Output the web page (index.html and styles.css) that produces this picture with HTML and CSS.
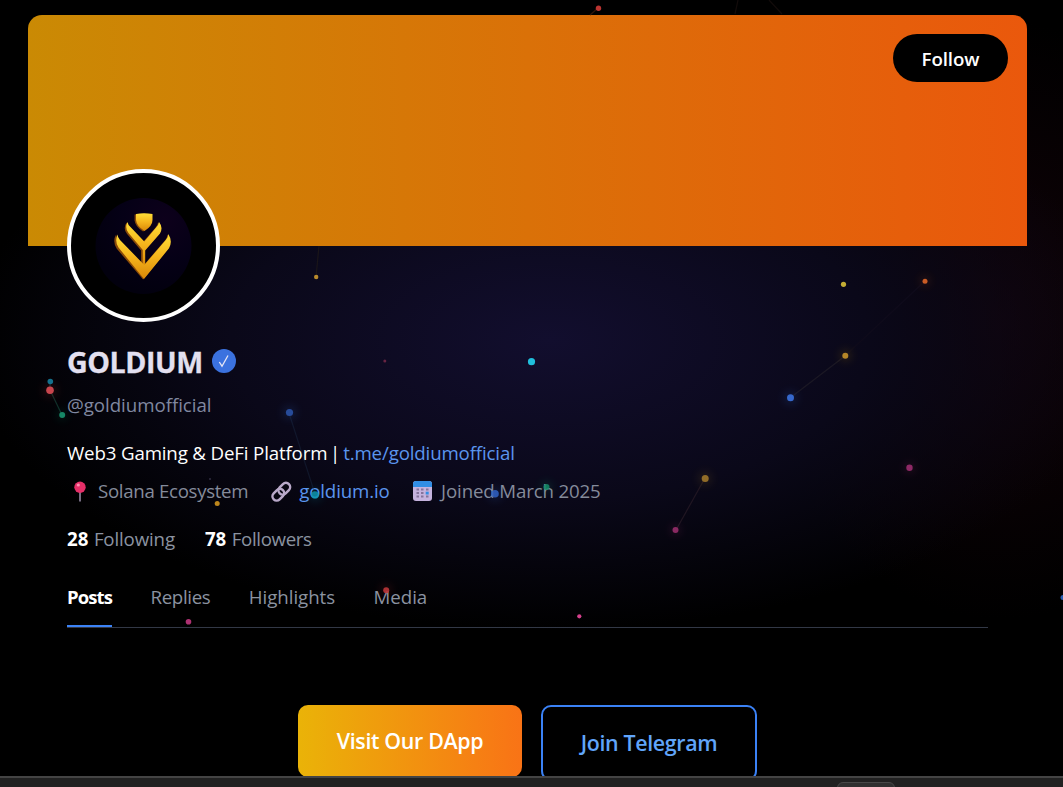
FILE: index.html
```html
<!DOCTYPE html>
<html lang="en">
<head>
<meta charset="utf-8">
<title>GOLDIUM</title>
<link rel="stylesheet" href="styles.css">
</head>
<body>
<main class="page">
  <section class="profile">
    <header class="banner"><button class="follow">Follow</button></header>
    <div class="details">
      <div class="avatar">
        <svg viewBox="0 0 145 145">
          <defs>
            <linearGradient id="gold" x1="0" y1="0" x2="0" y2="1"><stop offset="0" stop-color="#ffdf38"/><stop offset=".5" stop-color="#f5b41c"/><stop offset="1" stop-color="#d98808"/></linearGradient>
            <radialGradient id="disc" cx=".72" cy=".22" r=".8"><stop offset="0" stop-color="#0d001b"/><stop offset=".55" stop-color="#050016"/><stop offset="1" stop-color="#02000e"/></radialGradient>
          </defs>
          <circle cx="72.500" cy="73" r="48" fill="url(#disc)"/>
          <g fill="#8a4a08" transform="translate(-.9 .5)">
            <path d="M64.500 41q8-1.500 16.500 0v6q0 6-8 11-8-5-8.500-11z"/>
            <path d="M56.500 49q-4 6 .5 11.500L71 77v17h3V77l15-16.500q3.500-6-1-11.500-.5 3-2.500 5L73.300 68 59.500 54q-2.500-2-3-5z"/>
            <path d="M46 61q-4 7 .7 14.300L73 106l25-30.700q4-7-.7-14.300 0 3.500-2.500 6L73.300 92 49 67q-3-3-3-6z"/>
          </g>
          <g fill="url(#gold)">
            <path d="M65 41q8-1.500 16.500 0v6q0 6-8 11-8-5-8.500-11z"/>
            <path d="M56.500 49q-3 6 1 11L71.800 77v17h2.400V77.500L89 60.500q3.500-6-1-11.500-.5 3-2.500 5L73.300 68.500 59.500 54q-2.500-2-3-5z"/>
            <path d="M46.500 61.500q-3 7 1 13L73 106l25-30.700q4-7-.7-14.300 0 3.500-2.500 6L73.300 92 49 67q-2.500-3-2.500-5.500z"/>
          </g>
        </svg>
      </div>
      <h1 class="name"><span>GOLDIUM</span><i class="verified"><svg viewBox="0 0 24 24"><path d="M7.300 13l2.700 4.200L16 6.500" fill="none" stroke="#e6e6f5" stroke-width="1.300"/></svg></i></h1>
      <p class="handle">@goldiumofficial</p>
      <p class="bio"><span>Web3 Gaming &amp; DeFi Platform <span class="divider">|</span></span><a>t.me/goldiumofficial</a></p>
      <div class="meta">
        <svg class="pin" viewBox="0 0 26 24"><path d="M12 12h2v10l-1 1-1-1z" fill="#776d82"/><circle cx="13" cy="8.300" r="5.700" fill="#e52f68"/><circle cx="11.300" cy="6" r="1.600" fill="#ff8fb0"/></svg>
        <span class="place">Solana Ecosystem</span>
        <svg class="chain" viewBox="0 0 24 24" fill="none" stroke="#b9a9c9" stroke-width="2.500"><rect x="7.800" y="5.500" width="13" height="8.400" rx="4.200" transform="rotate(-45 14.300 9.700)"/><rect x="1.800" y="11.500" width="13" height="8.400" rx="4.200" transform="rotate(-45 8.300 15.700)"/></svg>
        <a class="site">goldium.io</a>
        <svg class="calendar" viewBox="0 0 19 20"><rect width="19" height="20" rx="3" fill="#c5b3de"/><path d="M0 6V3a3 3 0 0 1 3-3h13a3 3 0 0 1 3 3v3z" fill="#318ee5"/><path fill="#85749c" d="M3.500 7.500H6v2H3.500zM8 7.500h2.500v2H8zM13 7.500h2.500v2H13zM3.500 11H6v2H3.500zM8 11h2.500v2H8zM3.500 14.500H6v2H3.500zM8 14.500h2.500v2H8zM13 14.500h2.500v2H13z"/><path d="M12.700 10.700h3v2.800h-3z" fill="#318ee5"/></svg>
        <span class="joined">Joined March 2025</span>
      </div>
      <div class="stats"><p><b>28</b><span class="following">Following</span></p><p><b>78</b><span class="followers">Followers</span></p></div>
      <nav class="tabs"><a class="tab active">Posts</a><a class="tab replies">Replies</a><a class="tab">Highlights</a><a class="tab">Media</a></nav>
      <div class="actions"><a class="btn dapp">Visit Our DApp</a><a class="btn telegram">Join Telegram</a></div>
    </div>
  </section>
</main>
<div class="aura"></div>
<svg class="particles" viewBox="0 0 1063 787">
  <defs><filter id="blur" x="-1" y="-1" width="3" height="3"><feGaussianBlur stdDeviation="4"/></filter></defs>
  <g stroke-width="1.200" fill="none">
    <path d="M50 390L62 415" stroke="#11302a"/><path d="M50 381V390" stroke="#17313b"/>
    <path d="M790 398L845 356" stroke="#1b1824"/><path d="M705 478L676 530" stroke="#201622"/>
    <path d="M845 356L925 281" stroke="#0f0b1b"/><path d="M319 246L316 277" stroke="#1a1519"/>
    <path d="M289 413L315 494" stroke="#203550" opacity=".35"/><path d="M598 8L590 15" stroke="#30150a"/>
    <path d="M738 0L735 14M769 0L782 14" stroke="#120b0a"/>
  </g>
  <g filter="url(#blur)" opacity=".13">
    <circle cx="50" cy="390.500" r="7" fill="#ef4444"/><circle cx="62" cy="415" r="5" fill="#10b981"/>
    <circle cx="289.500" cy="412.500" r="7" fill="#3b82f6"/><circle cx="315" cy="495" r="7" fill="#06b6d4"/>
    <circle cx="495" cy="494" r="7" fill="#3b82f6"/><circle cx="546.500" cy="487" r="6" fill="#10b981"/>
    <circle cx="790.500" cy="398" r="7" fill="#3b82f6"/><circle cx="845.500" cy="355.500" r="6" fill="#eab308"/>
    <circle cx="705" cy="478.500" r="7" fill="#b98a22"/><circle cx="675.500" cy="530" r="5" fill="#ec4899"/>
    <circle cx="909.500" cy="468" r="5" fill="#ec4899"/><circle cx="925" cy="281" r="5" fill="#f97316"/>
    <circle cx="386" cy="590" r="6" fill="#ef4444"/>
  </g>
  <circle cx="598.500" cy="8.300" r="2.700" fill="#ba3431"/>
  <circle cx="316.200" cy="277" r="2.200" fill="#b98a2c"/>
  <circle cx="384.800" cy="361" r="1.500" fill="#672442"/>
  <circle cx="531.500" cy="361.700" r="3.600" fill="#20bfdc"/>
  <circle cx="843.500" cy="284.300" r="2.600" fill="#c3ad34"/>
  <circle cx="925" cy="281.200" r="2.500" fill="#ca5c25"/>
  <circle cx="845.300" cy="355.700" r="3" fill="#b58628"/>
  <circle cx="790.500" cy="397.800" r="3.500" fill="#3668cc"/>
  <circle cx="909.500" cy="467.800" r="3.200" fill="#8d2965"/>
  <circle cx="705.200" cy="478.500" r="3.500" fill="#916c28"/>
  <circle cx="675.500" cy="530" r="3" fill="#892962"/>
  <circle cx="50.300" cy="381.500" r="2.800" fill="#14718d"/>
  <circle cx="50" cy="390.300" r="3.800" fill="#c8454d"/>
  <circle cx="62.200" cy="415" r="3" fill="#168767"/>
  <circle cx="289.500" cy="412.500" r="3.600" fill="#274b99"/>
  <circle cx="210" cy="479" r="1" fill="#302c40"/>
  <circle cx="217.200" cy="503.500" r="2.500" fill="#bd861c"/>
  <circle cx="315" cy="495" r="3.800" fill="#0d95ae" opacity=".85"/>
  <circle cx="495" cy="493.700" r="3.800" fill="#3063c6" opacity=".85"/>
  <circle cx="546.500" cy="487" r="3" fill="#138c68" opacity=".85"/>
  <circle cx="386.200" cy="590.200" r="3" fill="#bc3638" opacity=".9"/>
  <circle cx="188.500" cy="621.700" r="2.800" fill="#ae3172"/>
  <circle cx="579.300" cy="616.300" r="2.100" fill="#d5418d"/>
  <circle cx="1063" cy="597.500" r="2.500" fill="#285bb0"/>
</svg>
<footer class="taskbar"><div class="thumb"></div></footer>
</body>
</html>
```
FILE: styles.css
```css
* { box-sizing: border-box; }
body { margin: 0; background: #000; font-family: "Open Sans", "Noto Sans", sans-serif; font-size: 18.7px; line-height: 29px; color: #fff; }
h1, p { margin: 0; font-weight: 400; }
span, a, b { white-space: nowrap; }
.page { height: 776px; padding: 15px 36px 0 28px; overflow: hidden; }
.banner { height: 231px; border-radius: 14px 14px 0 0; background: linear-gradient(90deg, #ca8a04, #ea580c); display: flex; justify-content: flex-end; padding: 19px; }
.follow { width: 115px; height: 48px; border: 0; border-radius: 24px; background: #000; color: #fff; font: 600 18.7px "Open Sans", sans-serif; letter-spacing: -.1px; padding: 1px 0 0; }
.details { padding: 0 39px; }
.avatar { position: relative; width: 153px; height: 153px; margin-top: -77px; border: 4px solid #fff; border-radius: 50%; background: #000; }
.avatar svg { display: block; width: 145px; height: 145px; }
.name { display: flex; align-items: center; gap: 9px; height: 38px; margin-top: 20px; font-weight: 700; font-size: 28.6px; letter-spacing: -.45px; color: #e3e0f0; -webkit-text-stroke: .3px #e3e0f0; }
.verified { width: 24px; height: 24px; border-radius: 50%; background: #3b72df; }
.verified svg { display: block; }
.handle { margin-top: 10px; color: #8088a0; letter-spacing: -.04px; }
.bio { margin-top: 19px; display: flex; gap: 3px; letter-spacing: -.15px; }
.divider { margin-left: -2px; }
.bio a, .site { color: #5b95ee; }
.joined, .site { letter-spacing: -.15px; }
.meta { margin-top: 9px; display: flex; align-items: center; color: #858b9b; }
.place { letter-spacing: -.33px; }
.pin { width: 26px; height: 24px; margin-right: 5px; }
.chain { width: 24px; height: 24px; margin: 0 5px 0 22px; }
.calendar { width: 19px; height: 20px; margin: 0 9px 0 23.5px; }
.stats { margin-top: 19px; display: flex; gap: 30px; color: #8b93a1; }
.stats p { display: flex; gap: 5.5px; }
.stats b { color: #fff; }
.following { letter-spacing: -.15px; }
.followers { letter-spacing: -.36px; }
.tabs { margin-top: 29px; height: 46px; display: flex; gap: 38.5px; border-bottom: 1px solid #323846; color: #8b93a1; }
.tab { height: 45px; letter-spacing: -.05px; }
.replies { letter-spacing: -.35px; }
.active { width: 45px; color: #fff; font-weight: 700; font-size: 18.5px; letter-spacing: -.9px; border-bottom: 2px solid #3b82f6; }
.actions { display: flex; justify-content: center; align-items: flex-start; gap: 19px; margin-top: 77px; }
.btn { display: flex; align-items: center; justify-content: center; padding-bottom: 2px; font-size: 21.4px; font-weight: 600; letter-spacing: -.35px; border-radius: 10px; }
.dapp { width: 224px; height: 72px; background: linear-gradient(90deg, #eab308, #f97316); }
.telegram { width: 216px; height: 76px; border: 2px solid #3b82f6; color: #60a5fa; }
.aura { position: absolute; inset: 0; z-index: -1; pointer-events: none; background: radial-gradient(ellipse 580px 290px at 550px 340px, #120e2e, #0a0819 55%, transparent), radial-gradient(ellipse 240px 300px at 1000px 320px, #110308, transparent); }
.particles { position: absolute; top: 0; left: 0; width: 1063px; height: 787px; pointer-events: none; }
.taskbar { height: 11px; background: #212121; border-top: 2px solid #444; padding: 4px 0 0 837px; overflow: hidden; }
.thumb { width: 58px; height: 20px; border: 1px solid #484848; border-radius: 6px; background: #303030; }
```
